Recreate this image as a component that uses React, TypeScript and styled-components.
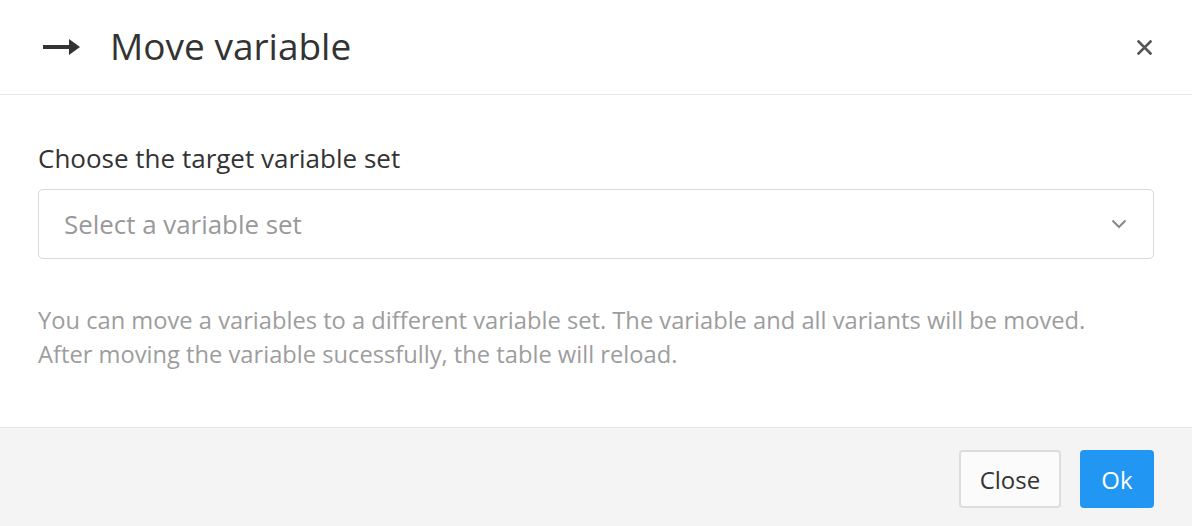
import styled, { createGlobalStyle } from 'styled-components'

const GlobalStyle = createGlobalStyle`
    html, body {
        margin: 0;
        padding: 0;
        background: #ffffff;
    }
    body {
        font-family: "Open Sans", "Noto Sans", sans-serif;
        color: #333333;
    }
`

export default function App() {
    return (
        <>
            <GlobalStyle />
            <Modal>
                <Header>
                    <TitleGroup>
                        <ArrowIcon />
                        <Title>Move variable</Title>
                    </TitleGroup>
                    <CloseIcon aria-label="close" />
                </Header>
                <Body>
                    <Label>Choose the target variable set</Label>
                    <Select>
                        <Placeholder>Select a variable set</Placeholder>
                        <Chevron />
                    </Select>
                    <Help>
                        You can move a variables to a different variable set. The variable and all variants will be moved.
                        <br />
                        After moving the variable sucessfully, the table will reload.
                    </Help>
                </Body>
                <Footer>
                    <Button>Close</Button>
                    <Button primary>Ok</Button>
                </Footer>
            </Modal>
        </>
    )
}

function ArrowIcon() {
    return (
        <svg width="37" height="18" viewBox="0 0 37 18">
            <rect x="0" y="7" width="28" height="4" fill="#333333" />
            <path d="M26 1 L37 9 L26 17 Z" fill="#333333" />
        </svg>
    )
}

function CloseIcon(props: { 'aria-label'?: string }) {
    return (
        <CloseButton {...props}>
            <svg width="15" height="15" viewBox="0 0 15 15">
                <path d="M1.5 1.5 L13.5 13.5 M13.5 1.5 L1.5 13.5" stroke="#555555" strokeWidth="2.6" strokeLinecap="square" />
            </svg>
        </CloseButton>
    )
}

function Chevron() {
    return (
        <svg width="16" height="10" viewBox="0 0 16 10">
            <path d="M1.5 1.5 L8 8 L14.5 1.5" fill="none" stroke="#888888" strokeWidth="2" />
        </svg>
    )
}

const Modal = styled.div`
    width: 1192px;
    height: 526px;
    display: flex;
    flex-direction: column;
    background: #ffffff;
`

const Header = styled.div`
    height: 94px;
    flex: none;
    display: flex;
    align-items: center;
    justify-content: space-between;
    padding: 0 40px 0 43px;
    border-bottom: 1px solid #e8e8e8;
`

const TitleGroup = styled.div`
    display: flex;
    align-items: center;
    gap: 30px;
`

const Title = styled.h1`
    margin: 0;
    font-size: 37px;
    font-weight: 400;
    color: #333333;
    line-height: 1;
    position: relative;
    top: -2px;
`

const CloseButton = styled.button`
    border: none;
    background: none;
    padding: 0;
    display: flex;
    cursor: pointer;
`

const Body = styled.div`
    flex: 1;
    padding: 45px 38px 0;
`

const Label = styled.div`
    font-size: 26px;
    line-height: 36px;
    color: #333333;
    margin-bottom: 13px;
`

const Select = styled.div`
    height: 70px;
    box-sizing: border-box;
    border: 1px solid #d9d9d9;
    border-radius: 5px;
    display: flex;
    align-items: center;
    justify-content: space-between;
    padding: 0 26px 0 25px;
`

const Placeholder = styled.span`
    font-size: 25.9px;
    color: #999999;
`

const Help = styled.p`
    margin: 44px 0 0;
    font-size: 23.7px;
    line-height: 34px;
    color: #9d9d9d;
`

const Footer = styled.div`
    height: 99px;
    box-sizing: border-box;
    flex: none;
    background: #f4f4f4;
    border-top: 1px solid #e8e8e8;
    display: flex;
    align-items: center;
    justify-content: flex-end;
    gap: 19px;
    padding: 4px 38px 0;
`

const Button = styled.button<{ primary?: boolean }>`
    height: 58px;
    padding: 0 ${p => (p.primary ? '19.5px' : '18.5px')};
    font-family: "Open Sans", "Noto Sans", sans-serif;
    font-size: 24px;
    border-radius: 4px;
    border: 2px solid ${p => (p.primary ? '#2196f3' : '#dddddd')};
    background: ${p => (p.primary ? '#2196f3' : '#fbfbfb')};
    color: ${p => (p.primary ? '#ffffff' : '#333333')};
    cursor: pointer;
`
